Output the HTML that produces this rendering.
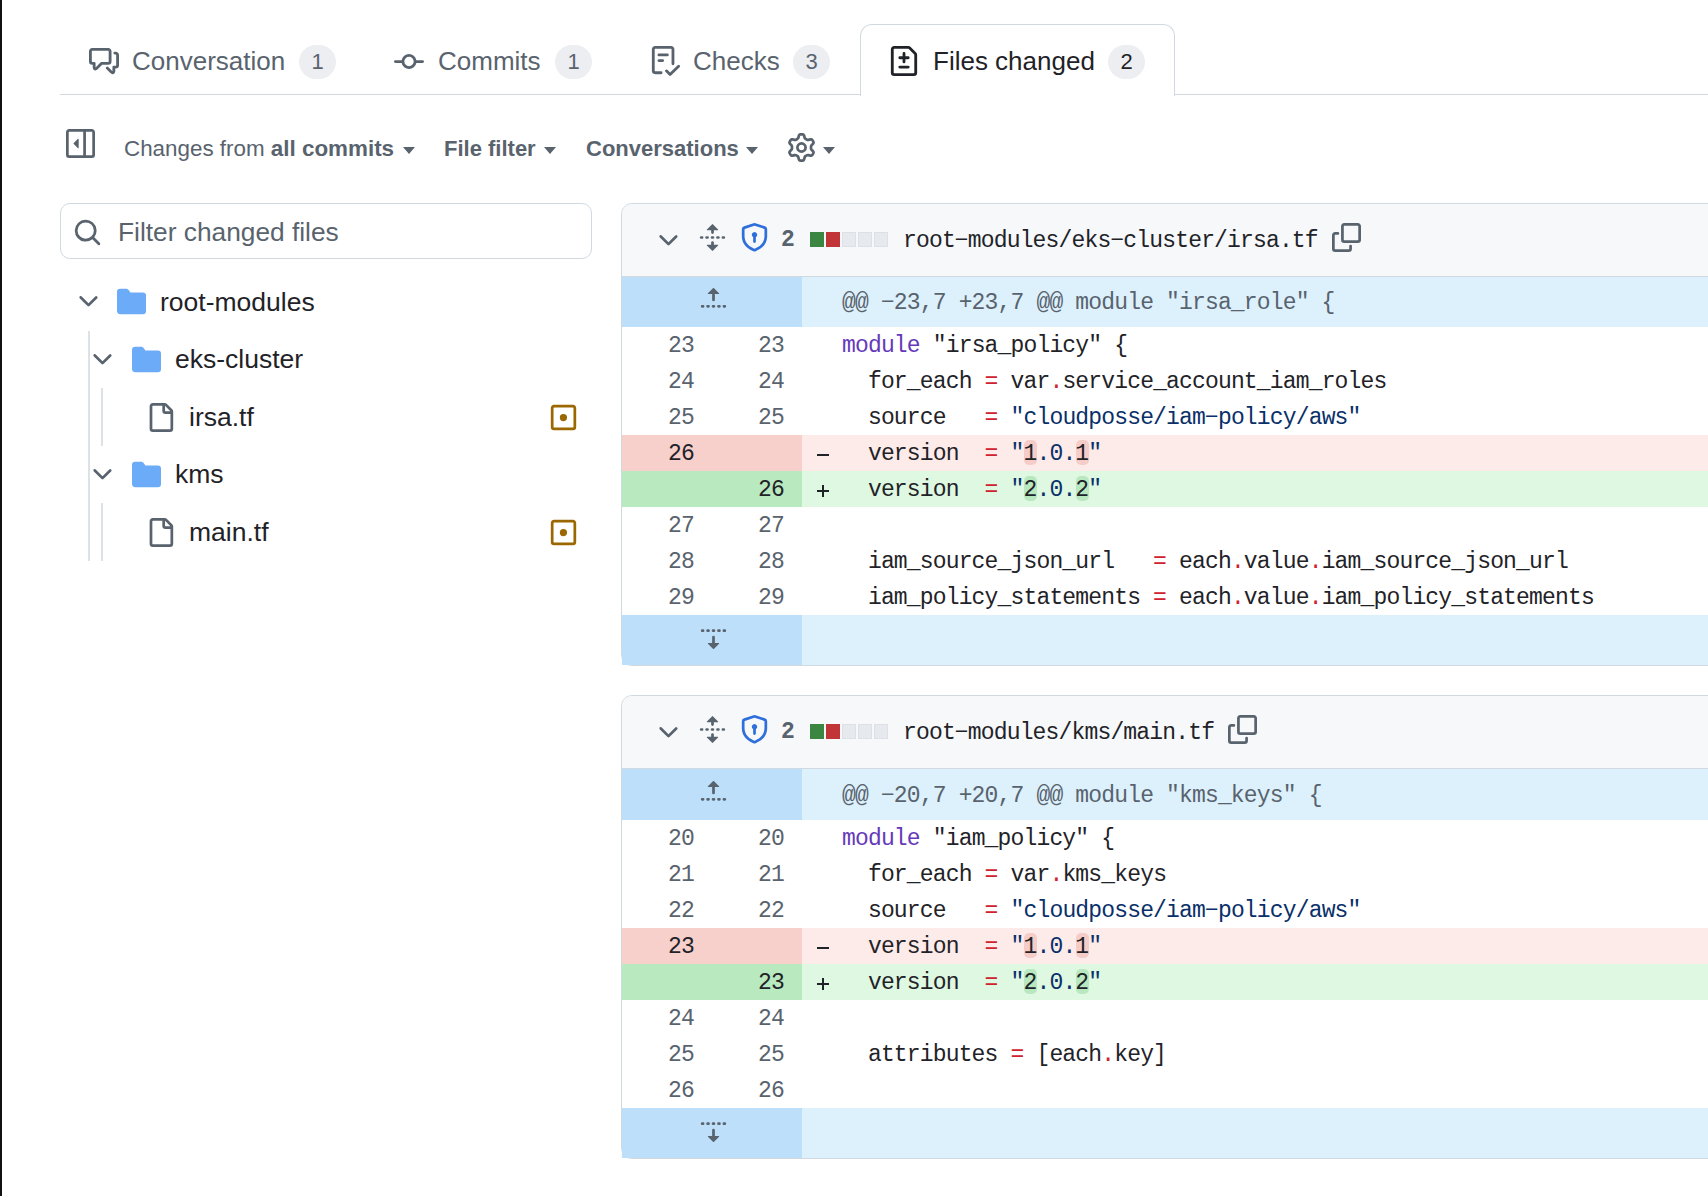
<!DOCTYPE html>
<html><head><meta charset="utf-8">
<style>
*{box-sizing:border-box;margin:0;padding:0}
html,body{width:1708px;height:1196px;overflow:hidden;background:#fff}
body{position:relative;font-family:"Liberation Sans",sans-serif;color:#1f2328}
.a{position:absolute}
.t{position:absolute;white-space:pre;line-height:1}
svg{position:absolute;display:block}
.mono{font-family:"Liberation Mono",monospace}
.muted{color:#59636e}
.cnt{position:absolute;top:45px;height:34px;width:37px;border-radius:17px;background:#eceef1;font-size:22px;line-height:34px;text-align:center;color:#59636e}
.caret{position:absolute;width:0;height:0;border-left:6.6px solid transparent;border-right:6.6px solid transparent;border-top:7px solid #59636e;margin-top:0.5px;margin-left:-0.5px}
.vl{position:absolute;width:2px;background:#dde2e7}
.box{position:absolute;left:621px;width:1200px;border:1px solid #d1d9e0;border-radius:11px;background:#fff}
.hdr{position:absolute;left:0;top:0;right:0;height:73px;background:#f6f8fa;border-bottom:1px solid #d1d9e0;border-radius:10px 10px 0 0}
.row{position:absolute;left:0;right:0;height:36px}
.num{position:absolute;top:0;height:100%;width:180px;left:0}
.ln{position:absolute;font-family:"Liberation Mono",monospace;font-size:23px;letter-spacing:-0.84px;line-height:36px;color:#59636e;text-align:right;white-space:pre}
.code{position:absolute;left:219px;font-family:"Liberation Mono",monospace;font-size:23px;letter-spacing:-0.84px;line-height:36px;color:#1f2328;white-space:pre}
.k{color:#6639ba}.r{color:#cf222e}.s{color:#0a3069}
.dx{background:#f6ccc8;border-radius:5px}
.ax{background:#b9e8c0;border-radius:5px}
</style></head><body>
<div class="a" style="left:0;top:0;width:2px;height:1196px;background:#111"></div>

<!-- tabs -->
<div class="a" style="left:60px;top:94px;width:1660px;height:1px;background:#d1d9e0"></div>
<div class="a" style="left:860px;top:24px;width:315px;height:72px;border:1px solid #d1d9e0;border-bottom:none;border-radius:12px 12px 0 0;background:#fff"></div>

<svg style="left:89px;top:45.5px" width="30" height="30" viewBox="0 0 16 16" fill="#59636e"><path d="M1.75 1h8.5c.966 0 1.75.784 1.75 1.75v5.5A1.75 1.75 0 0 1 10.25 10H7.061l-2.574 2.573A1.458 1.458 0 0 1 2 11.543V10h-.25A1.75 1.75 0 0 1 0 8.25v-5.5C0 1.784.784 1 1.75 1ZM1.5 2.75v5.5c0 .138.112.25.25.25h1a.75.75 0 0 1 .75.75v2.19l2.72-2.72a.749.749 0 0 1 .53-.22h3.5a.25.25 0 0 0 .25-.25v-5.5a.25.25 0 0 0-.25-.25h-8.5a.25.25 0 0 0-.25.25Zm13 2a.25.25 0 0 0-.25-.25h-.5a.75.75 0 0 1 0-1.5h.5c.966 0 1.75.784 1.75 1.75v5.5A1.75 1.75 0 0 1 14.25 12H14v1.543a1.458 1.458 0 0 1-2.487 1.03L9.22 12.28a.749.749 0 0 1 .326-1.275.749.749 0 0 1 .734.215l2.22 2.22v-2.19a.75.75 0 0 1 .75-.75h1a.25.25 0 0 0 .25-.25Z"/></svg>
<div class="t muted" style="left:132px;top:48px;font-size:26px">Conversation</div>
<div class="cnt" style="left:299px">1</div>

<svg style="left:394px;top:47px" width="30" height="30" viewBox="0 0 16 16" fill="#59636e"><path d="M11.93 8.5a4.002 4.002 0 0 1-7.86 0H.75a.75.75 0 0 1 0-1.5h3.32a4.002 4.002 0 0 1 7.86 0h3.32a.75.75 0 0 1 0 1.5Zm-1.43-.75a2.5 2.5 0 1 0-5 0 2.5 2.5 0 0 0 5 0Z"/></svg>
<div class="t muted" style="left:438px;top:48px;font-size:26px">Commits</div>
<div class="cnt" style="left:555px">1</div>

<svg style="left:650px;top:46px" width="30" height="30" viewBox="0 0 16 16" fill="#59636e"><path d="M2.5 1.75v11.5c0 .138.112.25.25.25h3.17a.75.75 0 0 1 0 1.5H2.75A1.75 1.75 0 0 1 1 13.25V1.75C1 .784 1.784 0 2.75 0h8.5C12.216 0 13 .784 13 1.75v7.736a.75.75 0 0 1-1.5 0V1.75a.25.25 0 0 0-.25-.25h-8.5a.25.25 0 0 0-.25.25Zm13.274 9.537v-.001l-4.557 4.45a.75.75 0 0 1-1.055-.008l-1.943-1.95a.75.75 0 0 1 1.062-1.058l1.419 1.425 4.026-3.932a.75.75 0 1 1 1.048 1.074ZM4.75 4h4.5a.75.75 0 0 1 0 1.5h-4.5a.75.75 0 0 1 0-1.5ZM4 7.75A.75.75 0 0 1 4.75 7h2a.75.75 0 0 1 0 1.5h-2A.75.75 0 0 1 4 7.75Z"/></svg>
<div class="t muted" style="left:693px;top:48px;font-size:26px">Checks</div>
<div class="cnt" style="left:793px">3</div>

<svg style="left:889px;top:46px" width="30" height="30" viewBox="0 0 16 16" fill="#1f2328"><path d="M1 1.75C1 .784 1.784 0 2.75 0h7.586c.464 0 .909.184 1.237.513l2.914 2.914c.329.328.513.773.513 1.237v9.586A1.75 1.75 0 0 1 13.25 16H2.75A1.75 1.75 0 0 1 1 14.25Zm1.75-.25a.25.25 0 0 0-.25.25v12.5c0 .138.112.25.25.25h10.5a.25.25 0 0 0 .25-.25V4.664a.25.25 0 0 0-.073-.177l-2.914-2.914a.25.25 0 0 0-.177-.073ZM8 3.25a.75.75 0 0 1 .75.75v1.5h1.5a.75.75 0 0 1 0 1.5h-1.5v1.5a.75.75 0 0 1-1.5 0V7h-1.5a.75.75 0 0 1 0-1.5h1.5V4A.75.75 0 0 1 8 3.25Zm-3 8a.75.75 0 0 1 .75-.75h4.5a.75.75 0 0 1 0 1.5h-4.5a.75.75 0 0 1-.75-.75Z"/></svg>
<div class="t" style="left:933px;top:48px;font-size:26px">Files changed</div>
<div class="cnt" style="left:1108px;color:#1f2328">2</div>

<!-- toolbar -->
<svg style="left:66px;top:129px" width="29" height="29" viewBox="0 0 16 16" fill="#59636e"><path d="m4.177 7.823 2.396-2.396A.25.25 0 0 1 7 5.604v4.792a.25.25 0 0 1-.427.177L4.177 8.177a.25.25 0 0 1 0-.354Z M0 1.75C0 .784.784 0 1.75 0h12.5C15.216 0 16 .784 16 1.75v12.5A1.75 1.75 0 0 1 14.25 16H1.75A1.75 1.75 0 0 1 0 14.25Zm1.75-.25a.25.25 0 0 0-.25.25v12.5c0 .138.112.25.25.25H9.5v-13Zm12.5 13a.25.25 0 0 0 .25-.25V1.75a.25.25 0 0 0-.25-.25H11v13Z"/></svg>
<div class="t muted" style="left:124px;top:138px;font-size:22.4px">Changes from <b>all commits</b></div>
<div class="caret" style="left:403px;top:146px"></div>
<div class="t muted" style="left:444px;top:138px;font-size:22px;font-weight:bold">File filter</div>
<div class="caret" style="left:544px;top:146px"></div>
<div class="t muted" style="left:586px;top:138px;font-size:22px;font-weight:bold">Conversations</div>
<div class="caret" style="left:746px;top:146px"></div>
<svg style="left:787px;top:133px" width="29" height="29" viewBox="0 0 16 16" fill="#59636e"><path d="M8 0a8.2 8.2 0 0 1 .701.031C9.444.095 9.99.645 10.16 1.29l.288 1.107c.018.066.079.158.212.224.231.114.454.243.668.386.123.082.233.09.299.071l1.103-.303c.644-.176 1.392.021 1.82.63.27.385.506.792.704 1.218.315.675.111 1.422-.364 1.891l-.814.806c-.049.048-.098.147-.088.294.016.257.016.515 0 .772-.01.147.038.246.088.294l.814.806c.475.469.679 1.216.364 1.891a7.977 7.977 0 0 1-.704 1.217c-.428.61-1.176.807-1.820.63l-1.102-.302c-.067-.019-.177-.011-.3.071a5.909 5.909 0 0 1-.668.386c-.133.066-.194.158-.211.224l-.29 1.106c-.168.646-.715 1.196-1.458 1.26a8.006 8.006 0 0 1-1.402 0c-.743-.064-1.289-.614-1.458-1.26l-.289-1.106c-.018-.066-.079-.158-.212-.224a5.738 5.738 0 0 1-.668-.386c-.123-.082-.233-.09-.299-.071l-1.103.303c-.644.176-1.392-.021-1.82-.63a8.12 8.12 0 0 1-.704-1.218c-.315-.675-.111-1.422.363-1.891l.815-.806c.05-.048.098-.147.088-.294a6.214 6.214 0 0 1 0-.772c.01-.147-.038-.246-.088-.294l-.815-.806C.635 6.045.431 5.298.746 4.623a7.92 7.920 0 0 1 .704-1.217c.428-.61 1.176-.807 1.82-.63l1.102.302c.067.019.177.011.3-.071.214-.143.437-.272.668-.386.133-.066.194-.158.211-.224l.29-1.106C6.009.645 6.556.095 7.299.03 7.53.01 7.764 0 8 0Zm-.571 1.525c-.036.003-.108.036-.137.146l-.289 1.105c-.147.561-.549.967-.998 1.189-.173.086-.34.183-.5.29-.417.278-.97.423-1.529.27l-1.103-.303c-.109-.03-.175.016-.195.045-.22.312-.412.644-.573.99-.014.031-.021.11.059.19l.815.806c.411.406.562.957.53 1.456a4.709 4.709 0 0 0 0 .582c.032.499-.119 1.05-.53 1.456l-.815.806c-.081.08-.073.159-.059.19.162.346.353.677.573.989.02.03.085.076.195.046l1.102-.303c.56-.153 1.113-.008 1.53.27.161.107.328.204.501.29.447.222.85.629.997 1.189l.289 1.105c.029.109.101.143.137.146a6.6 6.6 0 0 0 1.142 0c.036-.003.108-.036.137-.146l.289-1.105c.147-.561.549-.967.998-1.189.173-.086.34-.183.5-.29.417-.278.97-.423 1.529-.27l1.103.303c.109.029.175-.016.195-.045.22-.313.411-.644.573-.99.014-.031.021-.11-.059-.19l-.815-.806c-.411-.406-.562-.957-.53-1.456a4.709 4.709 0 0 0 0-.582c-.032-.499.119-1.05.53-1.456l.815-.806c.081-.08.073-.159.059-.19a6.464 6.464 0 0 0-.573-.989c-.02-.03-.085-.076-.195-.046l-1.102.303c-.56.153-1.113.008-1.53-.27a4.44 4.44 0 0 0-.501-.29c-.447-.222-.85-.629-.997-1.189l-.289-1.105c-.029-.11-.101-.143-.137-.146a6.6 6.6 0 0 0-1.142 0ZM11 8a3 3 0 1 1-6 0 3 3 0 0 1 6 0ZM9.5 8a1.5 1.5 0 1 0-3.001.001A1.5 1.5 0 0 0 9.5 8Z"/></svg>
<div class="caret" style="left:823px;top:146px"></div>

<!-- sidebar -->
<div class="a" style="left:60px;top:203px;width:532px;height:56px;border:1px solid #d1d9e0;border-radius:10px"></div>
<svg style="left:73px;top:218px" width="29" height="29" viewBox="0 0 16 16" fill="#59636e"><path d="M10.68 11.74a6 6 0 0 1-7.922-8.982 6 6 0 0 1 8.982 7.922l3.04 3.04a.749.749 0 0 1-.326 1.275.749.749 0 0 1-.734-.215ZM11.5 7a4.499 4.499 0 1 0-8.997 0A4.499 4.499 0 0 0 11.5 7Z"/></svg>
<div class="t muted" style="left:118px;top:219px;font-size:26.3px">Filter changed files</div>


<div class="vl" style="left:88px;top:331px;height:230px"></div>
<div class="vl" style="left:101px;top:388px;height:58px"></div>
<div class="vl" style="left:101px;top:503px;height:58px"></div>
<svg style="left:74px;top:287px" width="29" height="29" viewBox="0 0 16 16" fill="#59636e"><path d="M12.78 5.22a.749.749 0 0 1 0 1.06l-4.25 4.25a.749.749 0 0 1-1.06 0L3.22 6.28a.749.749 0 0 1 .326-1.275.749.749 0 0 1 .734.215L8 8.939l3.72-3.719a.749.749 0 0 1 1.06 0Z"/></svg>
<svg style="left:117px;top:287px" width="29" height="29" viewBox="0 0 16 16" fill="#6cabf8"><path d="M1.75 1A1.75 1.75 0 0 0 0 2.75v10.5C0 14.216.784 15 1.75 15h12.5A1.75 1.75 0 0 0 16 13.25v-8.5A1.75 1.75 0 0 0 14.25 3H7.5a.25.25 0 0 1-.2-.1l-.9-1.2C6.07 1.26 5.55 1 5 1H1.75Z"/></svg>
<div class="t" style="left:160px;top:289px;font-size:26.5px">root-modules</div>
<svg style="left:88px;top:345px" width="29" height="29" viewBox="0 0 16 16" fill="#59636e"><path d="M12.78 5.22a.749.749 0 0 1 0 1.06l-4.25 4.25a.749.749 0 0 1-1.06 0L3.22 6.28a.749.749 0 0 1 .326-1.275.749.749 0 0 1 .734.215L8 8.939l3.72-3.719a.749.749 0 0 1 1.06 0Z"/></svg>
<svg style="left:132px;top:345px" width="29" height="29" viewBox="0 0 16 16" fill="#6cabf8"><path d="M1.75 1A1.75 1.75 0 0 0 0 2.75v10.5C0 14.216.784 15 1.75 15h12.5A1.75 1.75 0 0 0 16 13.25v-8.5A1.75 1.75 0 0 0 14.25 3H7.5a.25.25 0 0 1-.2-.1l-.9-1.2C6.07 1.26 5.55 1 5 1H1.75Z"/></svg>
<div class="t" style="left:175px;top:346px;font-size:26.5px">eks-cluster</div>
<svg style="left:146px;top:403px" width="29" height="29" viewBox="0 0 16 16" fill="#59636e"><path d="M2 1.75C2 .784 2.784 0 3.75 0h6.586c.464 0 .909.184 1.237.513l2.914 2.914c.329.328.513.773.513 1.237v9.586A1.75 1.75 0 0 1 13.25 16h-9.5A1.75 1.75 0 0 1 2 14.25Zm1.75-.25a.25.25 0 0 0-.25.25v12.5c0 .138.112.25.25.25h9.5a.25.25 0 0 0 .25-.25V6h-2.75A1.75 1.75 0 0 1 9 4.25V1.5Zm6.75.062V4.25c0 .138.112.25.25.25h2.688l-.011-.013-2.914-2.914-.013-.011Z"/></svg>
<div class="t" style="left:189px;top:404px;font-size:26.5px">irsa.tf</div>
<svg style="left:549px;top:403px" width="29" height="29" viewBox="0 0 16 16" fill="#9a6700"><path d="M13.25 1c.966 0 1.75.784 1.75 1.75v10.5A1.75 1.75 0 0 1 13.25 15H2.75A1.75 1.75 0 0 1 1 13.25V2.75C1 1.784 1.784 1 2.75 1ZM2.75 2.5a.25.25 0 0 0-.25.25v10.5c0 .138.112.25.25.25h10.5a.25.25 0 0 0 .25-.25V2.75a.25.25 0 0 0-.25-.25ZM8 10a2 2 0 1 1-.001-3.999A2 2 0 0 1 8 10Z"/></svg>
<svg style="left:88px;top:460px" width="29" height="29" viewBox="0 0 16 16" fill="#59636e"><path d="M12.78 5.22a.749.749 0 0 1 0 1.06l-4.25 4.25a.749.749 0 0 1-1.06 0L3.22 6.28a.749.749 0 0 1 .326-1.275.749.749 0 0 1 .734.215L8 8.939l3.72-3.719a.749.749 0 0 1 1.06 0Z"/></svg>
<svg style="left:132px;top:460px" width="29" height="29" viewBox="0 0 16 16" fill="#6cabf8"><path d="M1.75 1A1.75 1.75 0 0 0 0 2.75v10.5C0 14.216.784 15 1.75 15h12.5A1.75 1.75 0 0 0 16 13.25v-8.5A1.75 1.75 0 0 0 14.25 3H7.5a.25.25 0 0 1-.2-.1l-.9-1.2C6.07 1.26 5.55 1 5 1H1.75Z"/></svg>
<div class="t" style="left:175px;top:461px;font-size:26.5px">kms</div>
<svg style="left:146px;top:518px" width="29" height="29" viewBox="0 0 16 16" fill="#59636e"><path d="M2 1.75C2 .784 2.784 0 3.75 0h6.586c.464 0 .909.184 1.237.513l2.914 2.914c.329.328.513.773.513 1.237v9.586A1.75 1.75 0 0 1 13.25 16h-9.5A1.75 1.75 0 0 1 2 14.25Zm1.75-.25a.25.25 0 0 0-.25.25v12.5c0 .138.112.25.25.25h9.5a.25.25 0 0 0 .25-.25V6h-2.75A1.75 1.75 0 0 1 9 4.25V1.5Zm6.75.062V4.25c0 .138.112.25.25.25h2.688l-.011-.013-2.914-2.914-.013-.011Z"/></svg>
<div class="t" style="left:189px;top:519px;font-size:26.5px">main.tf</div>
<svg style="left:549px;top:518px" width="29" height="29" viewBox="0 0 16 16" fill="#9a6700"><path d="M13.25 1c.966 0 1.75.784 1.75 1.75v10.5A1.75 1.75 0 0 1 13.25 15H2.75A1.75 1.75 0 0 1 1 13.25V2.75C1 1.784 1.784 1 2.75 1ZM2.75 2.5a.25.25 0 0 0-.25.25v10.5c0 .138.112.25.25.25h10.5a.25.25 0 0 0 .25-.25V2.75a.25.25 0 0 0-.25-.25ZM8 10a2 2 0 1 1-.001-3.999A2 2 0 0 1 8 10Z"/></svg>

<!--BOXES--><div class="box" style="top:203px;height:463px">
<div class="hdr"></div>
<svg style="left:32px;top:22px" width="29" height="29" viewBox="0 0 16 16" fill="#59636e"><path d="M12.78 5.22a.749.749 0 0 1 0 1.06l-4.25 4.25a.749.749 0 0 1-1.06 0L3.22 6.28a.749.749 0 0 1 .326-1.275.749.749 0 0 1 .734.215L8 8.939l3.72-3.719a.749.749 0 0 1 1.06 0Z"/></svg>
<svg style="left:76px;top:19px" width="29" height="29" viewBox="0 0 16 16" fill="#59636e"><path d="m8.177.677 2.896 2.896a.25.25 0 0 1-.177.427H8.75v1.25a.75.75 0 0 1-1.5 0V4H5.104a.25.25 0 0 1-.177-.427L7.823.677a.25.25 0 0 1 .354 0ZM7.25 10.75a.75.75 0 0 1 1.5 0V12h2.146a.25.25 0 0 1 .177.427l-2.896 2.896a.25.25 0 0 1-.354 0l-2.896-2.896A.25.25 0 0 1 5.104 12H7.25v-1.25Zm-5-2a.75.75 0 0 0 0-1.5h-.5a.75.75 0 0 0 0 1.5h.5ZM6 8a.75.75 0 0 1-.75.75h-.5a.75.75 0 0 1 0-1.5h.5A.75.75 0 0 1 6 8Zm2.25.75a.75.75 0 0 0 0-1.5h-.5a.75.75 0 0 0 0 1.5h.5ZM12 8a.75.75 0 0 1-.75.75h-.5a.75.75 0 0 1 0-1.5h.5A.75.75 0 0 1 12 8Zm2.25.75a.75.75 0 0 0 0-1.5h-.5a.75.75 0 0 0 0 1.5h.5Z"/></svg>
<svg style="left:118px;top:19px" width="29" height="29" viewBox="0 0 16 16" fill="#2f6fdc"><path d="m8.533.133 5.25 1.68A1.75 1.75 0 0 1 15 3.48V7c0 1.566-.32 3.182-1.303 4.682-.983 1.498-2.585 2.813-5.032 3.855a1.697 1.697 0 0 1-1.33 0c-2.447-1.042-4.049-2.357-5.032-3.855C1.32 10.182 1 8.566 1 7V3.48a1.755 1.755 0 0 1 1.217-1.667l5.25-1.68a1.748 1.748 0 0 1 1.066 0Zm-.61 1.429.001.001-5.25 1.68a.251.251 0 0 0-.174.237V7c0 1.36.275 2.666 1.057 3.859.784 1.194 2.121 2.342 4.366 3.298a.196.196 0 0 0 .154 0c2.245-.957 3.582-2.103 4.366-3.297C13.225 9.666 13.5 8.358 13.5 7V3.48a.25.25 0 0 0-.174-.238l-5.25-1.68a.25.25 0 0 0-.153 0ZM9.5 6.5c0 .536-.286 1.032-.75 1.3v2.45a.75.75 0 0 1-1.5 0V7.8A1.5 1.5 0 1 1 9.5 6.5Z"/></svg>
<div class="t mono" style="left:159px;top:25px;font-size:23px;font-weight:bold;color:#59636e">2</div>
<div class="a" style="left:188px;top:28px;width:14px;height:15px;background:#3b8640;"></div>
<div class="a" style="left:204px;top:28px;width:14px;height:15px;background:#c13539;"></div>
<div class="a" style="left:220px;top:28px;width:14px;height:15px;background:#e6e9ed;border:1px solid #dde1e5;"></div>
<div class="a" style="left:236px;top:28px;width:14px;height:15px;background:#e6e9ed;border:1px solid #dde1e5;"></div>
<div class="a" style="left:252px;top:28px;width:14px;height:15px;background:#e6e9ed;border:1px solid #dde1e5;"></div>
<div class="t mono" style="left:281px;top:25.5px;font-size:23px;letter-spacing:-0.84px">root−modules/eks−cluster/irsa.tf</div>
<svg style="left:710px;top:19px" width="29" height="29" viewBox="0 0 16 16" fill="#59636e"><path d="M0 6.75C0 5.784.784 5 1.75 5h1.5a.75.75 0 0 1 0 1.5h-1.5a.25.25 0 0 0-.25.25v7.5c0 .138.112.25.25.25h7.5a.25.25 0 0 0 .25-.25v-1.5a.75.75 0 0 1 1.5 0v1.5A1.75 1.75 0 0 1 9.25 16h-7.5A1.75 1.75 0 0 1 0 14.25Z"/><path d="M5 1.75C5 .784 5.784 0 6.75 0h7.5C15.216 0 16 .784 16 1.75v7.5A1.75 1.75 0 0 1 14.25 11h-7.5A1.75 1.75 0 0 1 5 9.25Zm1.75-.25a.25.25 0 0 0-.25.25v7.5c0 .138.112.25.25.25h7.5a.25.25 0 0 0 .25-.25v-7.5a.25.25 0 0 0-.25-.25Z"/></svg>
<div class="a" style="left:0;top:73px;width:180px;height:50px;background:#bedffa"></div>
<div class="a" style="left:180px;top:73px;right:0;height:50px;background:#ddf1fd"></div>
<svg style="left:77px;top:81.0px" width="29" height="29" viewBox="0 0 16 16" fill="#59636e"><path d="M7.823 1.677 4.927 4.573A.25.25 0 0 0 5.104 5H7.25v3.236a.75.75 0 1 0 1.5 0V5h2.146a.25.25 0 0 0 .177-.427L8.177 1.677a.25.25 0 0 0-.354 0ZM13.75 11a.75.75 0 0 0 0 1.5h.5a.75.75 0 0 0 0-1.5h-.5Zm-3.75.75a.75.75 0 0 1 .75-.75h.5a.75.75 0 0 1 0 1.5h-.5a.75.75 0 0 1-.75-.75ZM7.75 11a.75.75 0 0 0 0 1.5h.5a.75.75 0 0 0 0-1.5h-.5ZM4 11.75a.75.75 0 0 1 .75-.75h.5a.75.75 0 0 1 0 1.5h-.5a.75.75 0 0 1-.75-.75ZM1.75 11a.75.75 0 0 0 0 1.5h.5a.75.75 0 0 0 0-1.5h-.5Z"/></svg>
<div class="code" style="left:220px;top:81.0px;color:#59636e">@@ −23,7 +23,7 @@ module "irsa_role" {</div>
<div class="row" style="top:123px;background:#fff"><div class="num" style="width:180px;background:#fff"></div>
<div class="ln" style="left:0;width:72px;top:1px;color:#59636e">23</div>
<div class="ln" style="left:83px;width:79px;top:1px;color:#59636e">23</div>
<div class="code" style="left:220px;top:1px"><span class="k">module</span> "irsa_policy" {</div></div>
<div class="row" style="top:159px;background:#fff"><div class="num" style="width:180px;background:#fff"></div>
<div class="ln" style="left:0;width:72px;top:1px;color:#59636e">24</div>
<div class="ln" style="left:83px;width:79px;top:1px;color:#59636e">24</div>
<div class="code" style="left:220px;top:1px">  for_each <span class="r">=</span> var<span class="r">.</span>service_account_iam_roles</div></div>
<div class="row" style="top:195px;background:#fff"><div class="num" style="width:180px;background:#fff"></div>
<div class="ln" style="left:0;width:72px;top:1px;color:#59636e">25</div>
<div class="ln" style="left:83px;width:79px;top:1px;color:#59636e">25</div>
<div class="code" style="left:220px;top:1px">  source   <span class="r">=</span> <span class="s">"cloudposse/iam−policy/aws"</span></div></div>
<div class="row" style="top:231px;background:#fdebe9"><div class="num" style="width:180px;background:#f7d0cc"></div>
<div class="ln" style="left:0;width:72px;top:1px;color:#1f2328">26</div>
<div class="a" style="left:195px;top:18.7px;width:12px;height:2.6px;background:#1f2328"></div>
<div class="a" style="left:401.84px;top:5.2px;width:13px;height:24.4px;border-radius:5px;background:#f6ccc8"></div>
<div class="a" style="left:453.68px;top:5.2px;width:13px;height:24.4px;border-radius:5px;background:#f6ccc8"></div>
<div class="code" style="left:220px;top:1px">  version  <span class="r">=</span> <span class="s">"</span>1<span class="s">.0.</span>1<span class="s">"</span></div></div>
<div class="row" style="top:267px;background:#def8e2"><div class="num" style="width:180px;background:#b9e9bf"></div>
<div class="ln" style="left:83px;width:79px;top:1px;color:#1f2328">26</div>
<div class="a" style="left:195px;top:18.9px;width:12px;height:2.4px;background:#1f2328"></div><div class="a" style="left:200px;top:14.2px;width:2.2px;height:11.4px;background:#1f2328"></div>
<div class="a" style="left:401.84px;top:5.2px;width:13px;height:24.4px;border-radius:5px;background:#b9e8c0"></div>
<div class="a" style="left:453.68px;top:5.2px;width:13px;height:24.4px;border-radius:5px;background:#b9e8c0"></div>
<div class="code" style="left:220px;top:1px">  version  <span class="r">=</span> <span class="s">"</span>2<span class="s">.0.</span>2<span class="s">"</span></div></div>
<div class="row" style="top:303px;background:#fff"><div class="num" style="width:180px;background:#fff"></div>
<div class="ln" style="left:0;width:72px;top:1px;color:#59636e">27</div>
<div class="ln" style="left:83px;width:79px;top:1px;color:#59636e">27</div>
<div class="code" style="left:220px;top:1px"></div></div>
<div class="row" style="top:339px;background:#fff"><div class="num" style="width:180px;background:#fff"></div>
<div class="ln" style="left:0;width:72px;top:1px;color:#59636e">28</div>
<div class="ln" style="left:83px;width:79px;top:1px;color:#59636e">28</div>
<div class="code" style="left:220px;top:1px">  iam_source_json_url   <span class="r">=</span> each<span class="r">.</span>value<span class="r">.</span>iam_source_json_url</div></div>
<div class="row" style="top:375px;background:#fff"><div class="num" style="width:180px;background:#fff"></div>
<div class="ln" style="left:0;width:72px;top:1px;color:#59636e">29</div>
<div class="ln" style="left:83px;width:79px;top:1px;color:#59636e">29</div>
<div class="code" style="left:220px;top:1px">  iam_policy_statements <span class="r">=</span> each<span class="r">.</span>value<span class="r">.</span>iam_policy_statements</div></div>
<div class="a" style="left:0;top:411px;width:180px;height:50px;background:#bedffa"></div>
<div class="a" style="left:180px;top:411px;right:0;height:50px;background:#ddf1fd"></div>
<svg style="left:77px;top:419px" width="29" height="29" viewBox="0 0 16 16" fill="#59636e"><path d="m8.177 14.323 2.896-2.896a.25.25 0 0 0-.177-.427H8.75V7.764a.75.75 0 1 0-1.5 0V11H5.104a.25.25 0 0 0-.177.427l2.896 2.896a.25.25 0 0 0 .354 0ZM2.25 5a.75.75 0 0 0 0-1.5h-.5a.75.75 0 0 0 0 1.5h.5ZM6 4.25a.75.75 0 0 1-.75.75h-.5a.75.75 0 0 1 0-1.5h.5a.75.75 0 0 1 .75.75ZM8.25 5a.75.75 0 0 0 0-1.5h-.5a.75.75 0 0 0 0 1.5h.5ZM12 4.25a.75.75 0 0 1-.75.75h-.5a.75.75 0 0 1 0-1.5h.5a.75.75 0 0 1 .75.75Zm2.25.75a.75.75 0 0 0 0-1.5h-.5a.75.75 0 0 0 0 1.5h.5Z"/></svg>
</div>
<div class="box" style="top:695px;height:464px">
<div class="hdr"></div>
<svg style="left:32px;top:22px" width="29" height="29" viewBox="0 0 16 16" fill="#59636e"><path d="M12.78 5.22a.749.749 0 0 1 0 1.06l-4.25 4.25a.749.749 0 0 1-1.06 0L3.22 6.28a.749.749 0 0 1 .326-1.275.749.749 0 0 1 .734.215L8 8.939l3.72-3.719a.749.749 0 0 1 1.06 0Z"/></svg>
<svg style="left:76px;top:19px" width="29" height="29" viewBox="0 0 16 16" fill="#59636e"><path d="m8.177.677 2.896 2.896a.25.25 0 0 1-.177.427H8.75v1.25a.75.75 0 0 1-1.5 0V4H5.104a.25.25 0 0 1-.177-.427L7.823.677a.25.25 0 0 1 .354 0ZM7.25 10.75a.75.75 0 0 1 1.5 0V12h2.146a.25.25 0 0 1 .177.427l-2.896 2.896a.25.25 0 0 1-.354 0l-2.896-2.896A.25.25 0 0 1 5.104 12H7.25v-1.25Zm-5-2a.75.75 0 0 0 0-1.5h-.5a.75.75 0 0 0 0 1.5h.5ZM6 8a.75.75 0 0 1-.75.75h-.5a.75.75 0 0 1 0-1.5h.5A.75.75 0 0 1 6 8Zm2.25.75a.75.75 0 0 0 0-1.5h-.5a.75.75 0 0 0 0 1.5h.5ZM12 8a.75.75 0 0 1-.75.75h-.5a.75.75 0 0 1 0-1.5h.5A.75.75 0 0 1 12 8Zm2.25.75a.75.75 0 0 0 0-1.5h-.5a.75.75 0 0 0 0 1.5h.5Z"/></svg>
<svg style="left:118px;top:19px" width="29" height="29" viewBox="0 0 16 16" fill="#2f6fdc"><path d="m8.533.133 5.25 1.68A1.75 1.75 0 0 1 15 3.48V7c0 1.566-.32 3.182-1.303 4.682-.983 1.498-2.585 2.813-5.032 3.855a1.697 1.697 0 0 1-1.33 0c-2.447-1.042-4.049-2.357-5.032-3.855C1.32 10.182 1 8.566 1 7V3.48a1.755 1.755 0 0 1 1.217-1.667l5.25-1.68a1.748 1.748 0 0 1 1.066 0Zm-.61 1.429.001.001-5.25 1.68a.251.251 0 0 0-.174.237V7c0 1.36.275 2.666 1.057 3.859.784 1.194 2.121 2.342 4.366 3.298a.196.196 0 0 0 .154 0c2.245-.957 3.582-2.103 4.366-3.297C13.225 9.666 13.5 8.358 13.5 7V3.48a.25.25 0 0 0-.174-.238l-5.25-1.68a.25.25 0 0 0-.153 0ZM9.5 6.5c0 .536-.286 1.032-.75 1.3v2.45a.75.75 0 0 1-1.5 0V7.8A1.5 1.5 0 1 1 9.5 6.5Z"/></svg>
<div class="t mono" style="left:159px;top:25px;font-size:23px;font-weight:bold;color:#59636e">2</div>
<div class="a" style="left:188px;top:28px;width:14px;height:15px;background:#3b8640;"></div>
<div class="a" style="left:204px;top:28px;width:14px;height:15px;background:#c13539;"></div>
<div class="a" style="left:220px;top:28px;width:14px;height:15px;background:#e6e9ed;border:1px solid #dde1e5;"></div>
<div class="a" style="left:236px;top:28px;width:14px;height:15px;background:#e6e9ed;border:1px solid #dde1e5;"></div>
<div class="a" style="left:252px;top:28px;width:14px;height:15px;background:#e6e9ed;border:1px solid #dde1e5;"></div>
<div class="t mono" style="left:281px;top:25.5px;font-size:23px;letter-spacing:-0.84px">root−modules/kms/main.tf</div>
<svg style="left:606px;top:19px" width="29" height="29" viewBox="0 0 16 16" fill="#59636e"><path d="M0 6.75C0 5.784.784 5 1.75 5h1.5a.75.75 0 0 1 0 1.5h-1.5a.25.25 0 0 0-.25.25v7.5c0 .138.112.25.25.25h7.5a.25.25 0 0 0 .25-.25v-1.5a.75.75 0 0 1 1.5 0v1.5A1.75 1.75 0 0 1 9.25 16h-7.5A1.75 1.75 0 0 1 0 14.25Z"/><path d="M5 1.75C5 .784 5.784 0 6.75 0h7.5C15.216 0 16 .784 16 1.75v7.5A1.75 1.75 0 0 1 14.25 11h-7.5A1.75 1.75 0 0 1 5 9.25Zm1.75-.25a.25.25 0 0 0-.25.25v7.5c0 .138.112.25.25.25h7.5a.25.25 0 0 0 .25-.25v-7.5a.25.25 0 0 0-.25-.25Z"/></svg>
<div class="a" style="left:0;top:73px;width:180px;height:51px;background:#bedffa"></div>
<div class="a" style="left:180px;top:73px;right:0;height:51px;background:#ddf1fd"></div>
<svg style="left:77px;top:81.5px" width="29" height="29" viewBox="0 0 16 16" fill="#59636e"><path d="M7.823 1.677 4.927 4.573A.25.25 0 0 0 5.104 5H7.25v3.236a.75.75 0 1 0 1.5 0V5h2.146a.25.25 0 0 0 .177-.427L8.177 1.677a.25.25 0 0 0-.354 0ZM13.75 11a.75.75 0 0 0 0 1.5h.5a.75.75 0 0 0 0-1.5h-.5Zm-3.75.75a.75.75 0 0 1 .75-.75h.5a.75.75 0 0 1 0 1.5h-.5a.75.75 0 0 1-.75-.75ZM7.75 11a.75.75 0 0 0 0 1.5h.5a.75.75 0 0 0 0-1.5h-.5ZM4 11.75a.75.75 0 0 1 .75-.75h.5a.75.75 0 0 1 0 1.5h-.5a.75.75 0 0 1-.75-.75ZM1.75 11a.75.75 0 0 0 0 1.5h.5a.75.75 0 0 0 0-1.5h-.5Z"/></svg>
<div class="code" style="left:220px;top:81.5px;color:#59636e">@@ −20,7 +20,7 @@ module "kms_keys" {</div>
<div class="row" style="top:124px;background:#fff"><div class="num" style="width:180px;background:#fff"></div>
<div class="ln" style="left:0;width:72px;top:1px;color:#59636e">20</div>
<div class="ln" style="left:83px;width:79px;top:1px;color:#59636e">20</div>
<div class="code" style="left:220px;top:1px"><span class="k">module</span> "iam_policy" {</div></div>
<div class="row" style="top:160px;background:#fff"><div class="num" style="width:180px;background:#fff"></div>
<div class="ln" style="left:0;width:72px;top:1px;color:#59636e">21</div>
<div class="ln" style="left:83px;width:79px;top:1px;color:#59636e">21</div>
<div class="code" style="left:220px;top:1px">  for_each <span class="r">=</span> var<span class="r">.</span>kms_keys</div></div>
<div class="row" style="top:196px;background:#fff"><div class="num" style="width:180px;background:#fff"></div>
<div class="ln" style="left:0;width:72px;top:1px;color:#59636e">22</div>
<div class="ln" style="left:83px;width:79px;top:1px;color:#59636e">22</div>
<div class="code" style="left:220px;top:1px">  source   <span class="r">=</span> <span class="s">"cloudposse/iam−policy/aws"</span></div></div>
<div class="row" style="top:232px;background:#fdebe9"><div class="num" style="width:180px;background:#f7d0cc"></div>
<div class="ln" style="left:0;width:72px;top:1px;color:#1f2328">23</div>
<div class="a" style="left:195px;top:18.7px;width:12px;height:2.6px;background:#1f2328"></div>
<div class="a" style="left:401.84px;top:5.2px;width:13px;height:24.4px;border-radius:5px;background:#f6ccc8"></div>
<div class="a" style="left:453.68px;top:5.2px;width:13px;height:24.4px;border-radius:5px;background:#f6ccc8"></div>
<div class="code" style="left:220px;top:1px">  version  <span class="r">=</span> <span class="s">"</span>1<span class="s">.0.</span>1<span class="s">"</span></div></div>
<div class="row" style="top:268px;background:#def8e2"><div class="num" style="width:180px;background:#b9e9bf"></div>
<div class="ln" style="left:83px;width:79px;top:1px;color:#1f2328">23</div>
<div class="a" style="left:195px;top:18.9px;width:12px;height:2.4px;background:#1f2328"></div><div class="a" style="left:200px;top:14.2px;width:2.2px;height:11.4px;background:#1f2328"></div>
<div class="a" style="left:401.84px;top:5.2px;width:13px;height:24.4px;border-radius:5px;background:#b9e8c0"></div>
<div class="a" style="left:453.68px;top:5.2px;width:13px;height:24.4px;border-radius:5px;background:#b9e8c0"></div>
<div class="code" style="left:220px;top:1px">  version  <span class="r">=</span> <span class="s">"</span>2<span class="s">.0.</span>2<span class="s">"</span></div></div>
<div class="row" style="top:304px;background:#fff"><div class="num" style="width:180px;background:#fff"></div>
<div class="ln" style="left:0;width:72px;top:1px;color:#59636e">24</div>
<div class="ln" style="left:83px;width:79px;top:1px;color:#59636e">24</div>
<div class="code" style="left:220px;top:1px"></div></div>
<div class="row" style="top:340px;background:#fff"><div class="num" style="width:180px;background:#fff"></div>
<div class="ln" style="left:0;width:72px;top:1px;color:#59636e">25</div>
<div class="ln" style="left:83px;width:79px;top:1px;color:#59636e">25</div>
<div class="code" style="left:220px;top:1px">  attributes <span class="r">=</span> [each<span class="r">.</span>key]</div></div>
<div class="row" style="top:376px;background:#fff"><div class="num" style="width:180px;background:#fff"></div>
<div class="ln" style="left:0;width:72px;top:1px;color:#59636e">26</div>
<div class="ln" style="left:83px;width:79px;top:1px;color:#59636e">26</div>
<div class="code" style="left:220px;top:1px"></div></div>
<div class="a" style="left:0;top:412px;width:180px;height:50px;background:#bedffa"></div>
<div class="a" style="left:180px;top:412px;right:0;height:50px;background:#ddf1fd"></div>
<svg style="left:77px;top:420px" width="29" height="29" viewBox="0 0 16 16" fill="#59636e"><path d="m8.177 14.323 2.896-2.896a.25.25 0 0 0-.177-.427H8.75V7.764a.75.75 0 1 0-1.5 0V11H5.104a.25.25 0 0 0-.177.427l2.896 2.896a.25.25 0 0 0 .354 0ZM2.25 5a.75.75 0 0 0 0-1.5h-.5a.75.75 0 0 0 0 1.5h.5ZM6 4.25a.75.75 0 0 1-.75.75h-.5a.75.75 0 0 1 0-1.5h.5a.75.75 0 0 1 .75.75ZM8.25 5a.75.75 0 0 0 0-1.5h-.5a.75.75 0 0 0 0 1.5h.5ZM12 4.25a.75.75 0 0 1-.75.75h-.5a.75.75 0 0 1 0-1.5h.5a.75.75 0 0 1 .75.75Zm2.25.75a.75.75 0 0 0 0-1.5h-.5a.75.75 0 0 0 0 1.5h.5Z"/></svg>
</div><!--/BOXES-->
</body></html>
